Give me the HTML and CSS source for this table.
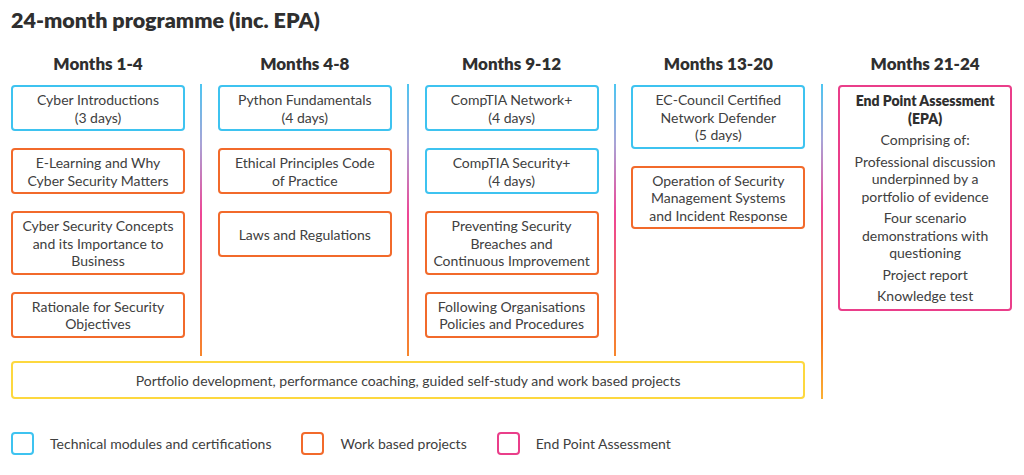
FILE: index.html
```html
<!DOCTYPE html>
<html lang="en">
<head>
<meta charset="utf-8">
<title>24-month programme</title>
<link rel="stylesheet" href="styles.css">
</head>
<body>
<h1 class="title">24-month programme (inc. EPA)</h1>
<div class="plan">
  <h2 class="head c1">Months 1-4</h2>
  <h2 class="head c2">Months 4-8</h2>
  <h2 class="head c3">Months 9-12</h2>
  <h2 class="head c4">Months 13-20</h2>
  <h2 class="head c5">Months 21-24</h2>

  <div class="stack c1">
    <div class="box tech">Cyber Introductions<br>(3 days)</div>
    <div class="box work">E-Learning and Why<br>Cyber Security Matters</div>
    <div class="box work">Cyber Security Concepts<br>and its Importance to<br>Business</div>
    <div class="box work">Rationale for Security<br>Objectives</div>
  </div>
  <div class="divider d1"></div>
  <div class="stack c2">
    <div class="box tech">Python Fundamentals<br>(4 days)</div>
    <div class="box work">Ethical Principles Code<br>of Practice</div>
    <div class="box work">Laws and Regulations</div>
  </div>
  <div class="divider d2"></div>
  <div class="stack c3">
    <div class="box tech">CompTIA Network+<br>(4 days)</div>
    <div class="box tech">CompTIA Security+<br>(4 days)</div>
    <div class="box work">Preventing Security<br>Breaches and<br>Continuous Improvement</div>
    <div class="box work">Following Organisations<br>Policies and Procedures</div>
  </div>
  <div class="divider d3"></div>
  <div class="stack c4">
    <div class="box tech">EC-Council Certified<br>Network Defender<br>(5 days)</div>
    <div class="box work">Operation of Security<br>Management Systems<br>and Incident Response</div>
  </div>
  <div class="divider d4 long"></div>
  <div class="stack c5">
    <div class="box epa">
      <p class="epa-title">End Point Assessment<br>(EPA)</p>
      <p>Comprising of:</p>
      <p>Professional discussion<br>underpinned by a<br>portfolio of evidence</p>
      <p>Four scenario<br>demonstrations with<br>questioning</p>
      <p>Project report</p>
      <p>Knowledge test</p>
    </div>
  </div>

  <div class="portfolio">Portfolio development, performance coaching, guided self-study and work based projects</div>
</div>

<ul class="legend">
  <li><span class="key tech"></span>Technical modules and certifications</li>
  <li><span class="key work"></span>Work based projects</li>
  <li><span class="key epa"></span>End Point Assessment</li>
</ul>
</body>
</html>
```

FILE: styles.css
```css
* { box-sizing: border-box; }

body {
  margin: 0;
  padding: 0 11px;
  background: #ffffff;
  font-family: Lato, "Liberation Sans", sans-serif;
  color: #404040;
}

.title {
  margin: 0;
  padding-top: 7px;
  font-size: 21.5px;
  line-height: 26px;
  font-weight: 800;
  color: #2f2f2f;
}

.plan {
  display: grid;
  grid-template-columns: 174px 2px 174px 2px 174px 2px 174px 2px 174px;
  grid-template-rows: auto 272px auto;
  column-gap: 15.4px;
  margin-top: 21px;
}

.head {
  margin: 0;
  grid-row: 1;
  text-align: center;
  font-size: 17px;
  line-height: 20px;
  font-weight: 800;
  color: #2f2f2f;
  padding-bottom: 10px;
}

.c1 { grid-column: 1; }
.c2 { grid-column: 3; }
.c3 { grid-column: 5; }
.c4 { grid-column: 7; }
.c5 { grid-column: 9; }

.stack {
  grid-row: 2;
  display: flex;
  flex-direction: column;
  gap: 17px;
  padding-top: 1px;
}

.divider {
  grid-row: 2;
  width: 2px;
  background: linear-gradient(to bottom, #4cc6f2 0%, #a9a3d6 22%, #ee4596 48%, #f26a4a 78%, #f7862c 100%);
}
.d1 { grid-column: 2; }
.d2 { grid-column: 4; }
.d3 { grid-column: 6; }
.d4 { grid-column: 8; }
.divider.long {
  grid-row: 2 / 4;
  background: linear-gradient(to bottom, #4cc6f2 0%, #a9a3d6 18%, #ee4596 40%, #f26a4a 62%, #f5721f 78%, #fbb034 100%);
}

.box {
  border: 2px solid;
  border-radius: 4px;
  min-height: 46px;
  padding: 4px 2px 3px;
  display: flex;
  flex-direction: column;
  justify-content: center;
  text-align: center;
  font-size: 14px;
  line-height: 17.5px;
  color: #404040;
}

.box.tech, .key.tech { border-color: #3ec3f0; }
.box.work, .key.work { border-color: #f26a2b; }
.box.epa, .key.epa { border-color: #ea3e8a; }

.box.epa {
  justify-content: flex-start;
  padding: 5px 4px 4px;
  gap: 4px;
}
.box.epa p { margin: 0; }
.box.epa .epa-title { font-weight: 800; color: #2f2f2f; }

.portfolio {
  grid-row: 3;
  grid-column: 1 / 8;
  margin-top: 5px;
  height: 38px;
  border: 2px solid #fdd83f;
  border-radius: 4px;
  display: flex;
  align-items: center;
  justify-content: center;
  font-size: 14px;
  color: #404040;
}

.legend {
  list-style: none;
  margin: 33px 0 0;
  padding: 0;
  display: flex;
  gap: 30px;
  font-size: 14px;
}

.legend li {
  display: flex;
  align-items: center;
  gap: 16px;
}

.key {
  width: 23px;
  height: 23px;
  border: 2px solid;
  border-radius: 4px;
  display: inline-block;
}
```
